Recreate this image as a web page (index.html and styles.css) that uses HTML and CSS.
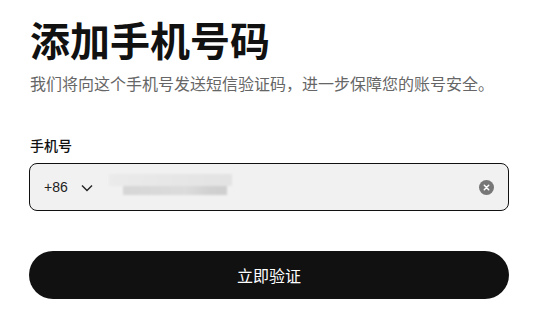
FILE: index.html
```html
<!DOCTYPE html>
<html lang="zh-CN">
<head>
    <meta charset="UTF-8">
    <meta name="viewport" content="width=device-width, initial-scale=1.0">
    <title>添加手机号码</title>
    <link rel="stylesheet" href="styles.css">
</head>
<body>
    <div class="page">
        <h1 class="title">添加手机号码</h1>
        <p class="subtitle">我们将向这个手机号发送短信验证码，进一步保障您的账号安全。</p>

        <label class="label" for="phone">手机号</label>
        <div class="phone-box">
            <div class="area-code">
                <span>+86</span>
                <svg class="chevron" width="12" height="8" viewBox="0 0 12 8">
                    <path d="M1 1.5 L6 6.5 L11 1.5" fill="none" stroke="#222" stroke-width="1.4"/>
                </svg>
            </div>
            <div class="masked" id="phone">
                <div class="mask-top"></div>
                <div class="mask-bottom"></div>
            </div>
            <button class="clear" aria-label="清除">
                <svg width="15" height="15" viewBox="0 0 15 15">
                    <circle cx="7.5" cy="7.5" r="7.5" fill="#777"/>
                    <path d="M5.3 5.3 L9.7 9.7 M9.7 5.3 L5.3 9.7" stroke="#fff" stroke-width="1.5" stroke-linecap="round"/>
                </svg>
            </button>
        </div>

        <button class="submit">立即验证</button>
    </div>
</body>
</html>
```

FILE: styles.css
```css
body {
    margin: 0;
    background: #fff;
    font-family: "Noto Sans CJK SC", "Noto Sans", sans-serif;
    color: #111;
}
.page {
    padding: 14px 42px 0 29px;
    display: flex;
    flex-direction: column;
}
.title {
    margin: 0 0 0 1px;
    font-size: 40px;
    line-height: 50px;
    font-weight: 700;
}
.subtitle {
    margin: 8px 0 0 1px;
    font-size: 16px;
    line-height: 22px;
    color: #666;
}
.label {
    margin: 41px 0 0 1px;
    font-size: 14px;
    line-height: 20px;
    font-weight: 500;
}
.phone-box {
    margin-top: 8px;
    height: 46px;
    display: flex;
    align-items: center;
    background: #f1f1f1;
    border: 1px solid #111;
    border-radius: 8px;
    padding: 0 14px 0 14px;
}
.area-code {
    display: flex;
    align-items: center;
    gap: 13px;
    font-family: "Liberation Sans", Arial, sans-serif;
    font-size: 14px;
    color: #222;
}
.chevron {
    margin-top: 1px;
}
.masked {
    margin-left: 16px;
    width: 123px;
    height: 26px;
    display: flex;
    flex-direction: column;
    filter: blur(1px);
}
.mask-top {
    height: 12px;
    background: linear-gradient(90deg, #ebebeb, #e6e6e6 60%, #e3e3e3);
}
.mask-bottom {
    height: 9px;
    margin: 0 0 0 14px;
    width: 104px;
    background: linear-gradient(90deg, #d6d6d6, #dcdcdc 60%, #d0d0d0 85%, #cfcfcf);
}
.clear {
    margin-left: auto;
    padding: 0;
    border: 0;
    background: none;
    display: flex;
    cursor: pointer;
}
.submit {
    margin-top: 40px;
    height: 48px;
    border: 0;
    border-radius: 24px;
    background: #111;
    color: #fff;
    font-family: "Noto Sans CJK SC", sans-serif;
    font-size: 16px;
    cursor: pointer;
}
```
